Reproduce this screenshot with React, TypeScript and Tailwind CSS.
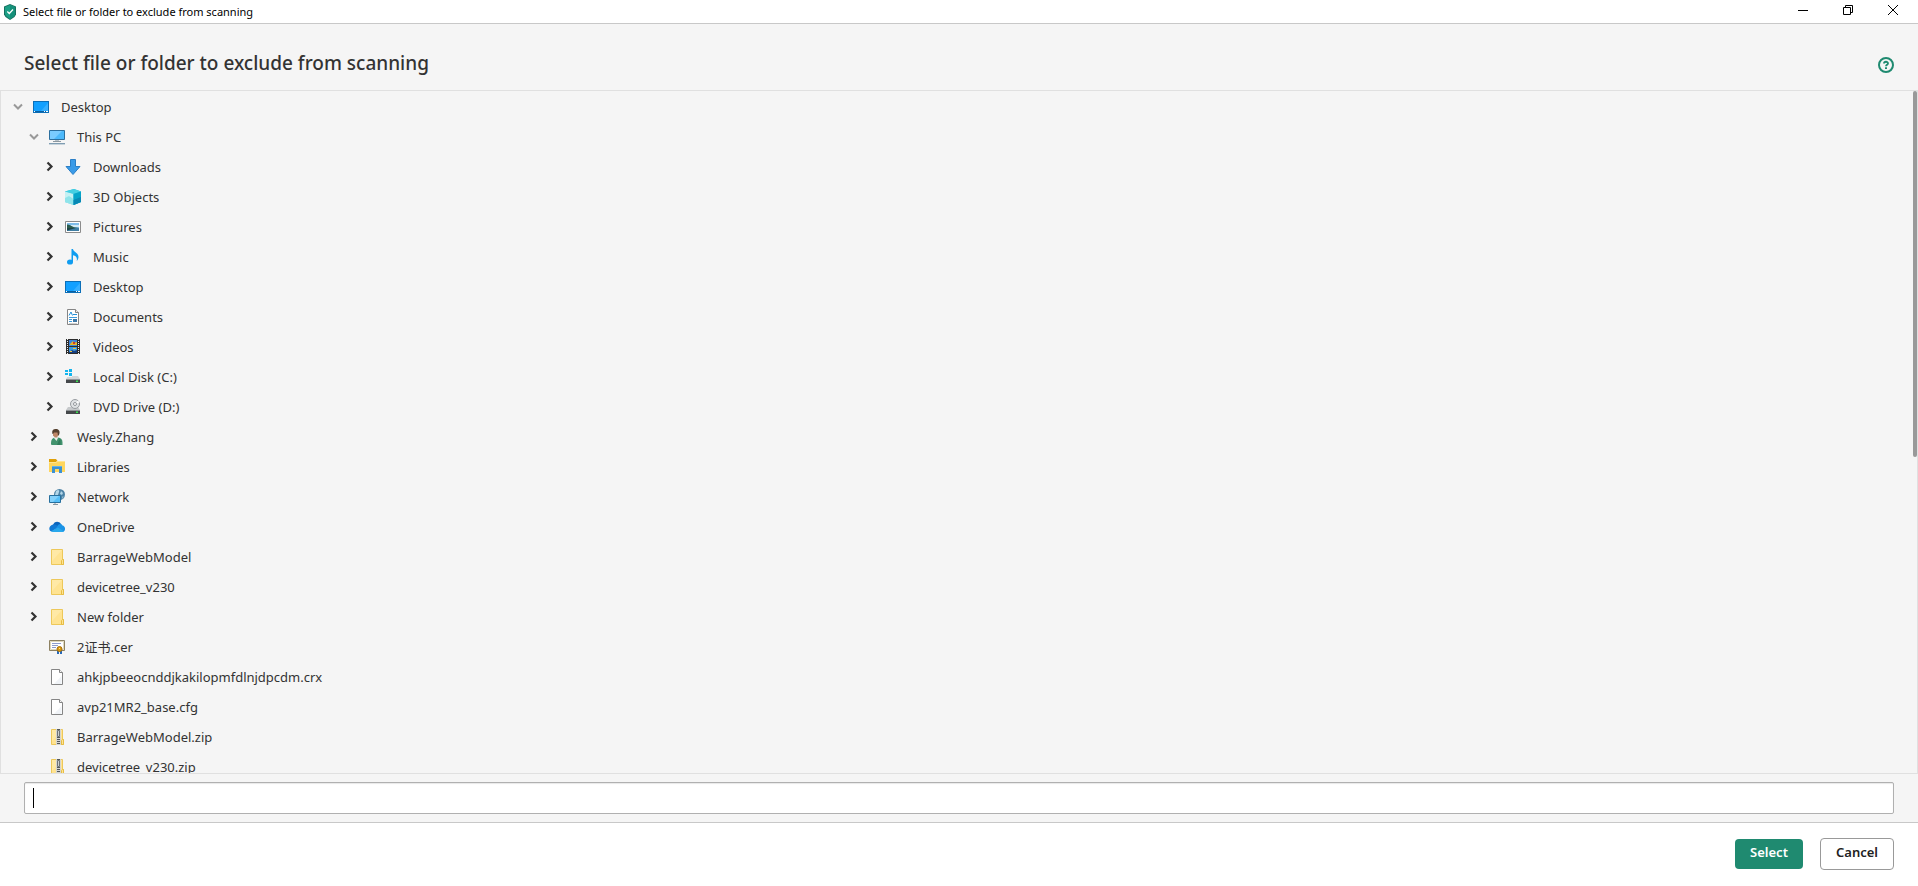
import { useState } from "react";
import { clsx } from "clsx";

type IconName =
  | "desktop"
  | "pc"
  | "downloads"
  | "objects"
  | "pictures"
  | "music"
  | "documents"
  | "videos"
  | "disk"
  | "dvd"
  | "user"
  | "libraries"
  | "network"
  | "onedrive"
  | "folder"
  | "cert"
  | "file"
  | "zip";

interface TreeItem {
  label: string;
  icon: IconName;
  depth: 0 | 1 | 2;
  state: "open" | "closed" | "leaf";
}

const ITEMS: TreeItem[] = [
  { label: "Desktop", icon: "desktop", depth: 0, state: "open" },
  { label: "This PC", icon: "pc", depth: 1, state: "open" },
  { label: "Downloads", icon: "downloads", depth: 2, state: "closed" },
  { label: "3D Objects", icon: "objects", depth: 2, state: "closed" },
  { label: "Pictures", icon: "pictures", depth: 2, state: "closed" },
  { label: "Music", icon: "music", depth: 2, state: "closed" },
  { label: "Desktop", icon: "desktop", depth: 2, state: "closed" },
  { label: "Documents", icon: "documents", depth: 2, state: "closed" },
  { label: "Videos", icon: "videos", depth: 2, state: "closed" },
  { label: "Local Disk (C:)", icon: "disk", depth: 2, state: "closed" },
  { label: "DVD Drive (D:)", icon: "dvd", depth: 2, state: "closed" },
  { label: "Wesly.Zhang", icon: "user", depth: 1, state: "closed" },
  { label: "Libraries", icon: "libraries", depth: 1, state: "closed" },
  { label: "Network", icon: "network", depth: 1, state: "closed" },
  { label: "OneDrive", icon: "onedrive", depth: 1, state: "closed" },
  { label: "BarrageWebModel", icon: "folder", depth: 1, state: "closed" },
  { label: "devicetree_v230", icon: "folder", depth: 1, state: "closed" },
  { label: "New folder", icon: "folder", depth: 1, state: "closed" },
  { label: "2证书.cer", icon: "cert", depth: 1, state: "leaf" },
  { label: "ahkjpbeeocnddjkakilopmfdlnjdpcdm.crx", icon: "file", depth: 1, state: "leaf" },
  { label: "avp21MR2_base.cfg", icon: "file", depth: 1, state: "leaf" },
  { label: "BarrageWebModel.zip", icon: "zip", depth: 1, state: "leaf" },
  { label: "devicetree_v230.zip", icon: "zip", depth: 1, state: "leaf" },
];

const INDENT = { 0: "pl-[10px]", 1: "pl-[26px]", 2: "pl-[42px]" };

const FOLDER = (
  <>
    <path d="M2.5 .5h11v10h1v5h-12z" fill="#ffe391" stroke="#edc85a" />
    <path d="M3 1h10L3 12z" fill="#ffe9a6" />
    <path d="M12.500 15.500v-4l1-1h1v5z" fill="#ffe391" stroke="#e6bd45" />
  </>
);

const ICONS: Record<IconName, React.ReactNode> = {
  desktop: (
    <>
      <path d="M0 2h16v12H0z" fill="#0c6fb8" />
      <path d="M1 3h14v9H1z" fill="#12a0ff" />
      <path d="M15 4v8H8z" fill="#36afff" />
      <path d="M1 12h14v1H1z" fill="#0a5f9f" />
      <path d="M1 12h1v1H1zM11 12h1v1h-1zM13 12h2v1h-2z" fill="#fff" />
    </>
  ),
  pc: (
    <>
      <path d="M.5 1.500h15v9H.5z" fill="#4cb9fb" stroke="#2c6f9e" />
      <path d="M1 2h12L5 10H1z" fill="#7accff" />
      <path d="M6 11h4v1H6z" fill="#b9c3ca" />
      <path d="M4 12h8v1H4z" fill="#8b979f" />
      <path d="M0 14h16v1H0z" fill="#7f9db2" />
      <path d="M0 15h16v1H0z" fill="#c8d4dc" />
    </>
  ),
  downloads: <path d="M5.500.5h5v7h4.500L8 15.500 1 7.500h4.500z" fill="#3a9be8" stroke="#2b7fc6" />,
  objects: (
    <>
      <path d="M0 2.500 9 0l7 2.500V13l-7 3-9-3z" fill="#19b9d8" />
      <path d="M0 2.500 9 0l7 2.500L8.500 5z" fill="#45cfe2" />
      <path d="M0 2.500 8.500 5v11L0 13z" fill="#c5f1f3" />
      <path d="M0 9l4-2 4.500 3v6L0 13z" fill="#8fe4ea" />
      <path d="M8.500 5 16 2.500V13l-7.500 3z" fill="#06a4c9" />
      <path d="M8.500 11 16 8v5l-7.500 3z" fill="#0788b4" />
    </>
  ),
  pictures: (
    <>
      <path d="M.5 2.500h15v11H.5z" fill="#fff" stroke="#8c8c8c" />
      <path d="M2 4h12v8H2z" fill="#7fbdea" />
      <path d="M6 6h8v2H6z" fill="#d5ebf7" />
      <path d="M2 5.500c3 0 4 1.500 7 2.800l5 .7H2z" fill="#2c5c4c" />
      <path d="M2 9h12v3H2z" fill="#3f7ea3" />
      <path d="M2 9h9l-9 2.500z" fill="#1f4648" />
    </>
  ),
  music: (
    <>
      <path d="M6.500 0H8c.3 2.800 5.500 3.700 5.500 8 0 1.500-.7 3-1.800 4 .8-3.300-.7-5.300-3.700-5.700V13H6.500z" fill="#109df0" />
      <ellipse cx="5" cy="13" rx="3" ry="2.600" fill="#109df0" />
    </>
  ),
  documents: (
    <>
      <path d="M2.500.5h8l3 3v12h-11z" fill="#fff" stroke="#858585" />
      <path d="M10.500.5v3h3" fill="#eee" stroke="#858585" />
      <path d="M4 6.500 6 3l1.500 3.500M8 5.500h4" fill="none" stroke="#2590d8" />
      <path d="M4 8.500h8M4 10.500h3M4 12.500h3" stroke="#3a9bdd" />
      <path d="M8 10h4v3H8z" fill="#3c76a6" />
      <path d="M4 14.500h8" stroke="#d0d0d0" />
    </>
  ),
  videos: (
    <>
      <path d="M1 0h14v15H1z" fill="#2d2d2d" />
      <path d="M2.500 0v15M13.500 0v15" stroke="#efefef" strokeDasharray="1 1" />
      <path d="M4 1h8v6H4z" fill="#3c83d6" />
      <path d="M4 8h8v6H4z" fill="#3c9be0" />
      <path d="M5 5l3-3 1 2 3-1v3H5z" fill="#e7b52a" />
      <path d="M8 3h2v2H8z" fill="#c93a2e" />
      <path d="M4 13l3-2 2 1 3-1v3H4z" fill="#173f80" />
      <path d="M8 9h3v1H8zM5 12h2v1H5z" fill="#f0c63c" />
    </>
  ),
  disk: (
    <>
      <path d="M3 7h10l2 3H1z" fill="#d3d5d7" />
      <path d="M1 10h14v4H1z" fill="#45484b" />
      <path d="M1 10h14v1H1z" fill="#909497" />
      <path d="M11 11.500h2v1.500h-2z" fill="#38e04d" />
      <path d="M0 0h7v8H0z" fill="#f5f5f5" />
      <path d="M0 1h3v2H0zM4 0h3v3H4zM0 4h3v2H0zM4 4h3v3H4z" fill="#13b5ee" />
    </>
  ),
  dvd: (
    <>
      <path d="M3 8h10l2 3H1z" fill="#c6c9cb" />
      <path d="M1 11h14v4H1z" fill="#45484b" />
      <path d="M1 11h14v1H1z" fill="#8f9396" />
      <path d="M11 12.500h2v1.500h-2z" fill="#38e04d" />
      <circle cx="10" cy="5" r="4.500" fill="#dfe2e4" stroke="#989ca0" />
      <path d="M10 5 13 1.500l1.500 2z" fill="#fff" />
      <circle cx="10" cy="5" r="1.500" fill="#fff" stroke="#92979b" />
    </>
  ),
  user: (
    <>
      <path d="M2 15c0-4 1-6 4-6.500h3c3 .3 4.500 2 4.500 5V16H2.500z" fill="#42936e" />
      <path d="M5.500 8h3l.5 1-1.500 3L5 9z" fill="#e9eee9" />
      <path d="M4 3.500c0-3 5.500-3 5.500 0V6L8 8.500H6L4 6.500z" fill="#bf8768" />
      <path d="M3.500 5C2.500 1 4.500 0 7 0c3 0 4.500 2.500 3 6l-1 .8L8.500 3.500H5L4 5z" fill="#55402f" />
      <path d="M8 16l2-5 1.500-1V16z" fill="#327c5b" />
    </>
  ),
  libraries: (
    <>
      <path d="M0 0h7l1.500 2H16v3H0z" fill="#e0a008" />
      <path d="M0 3h7l1-1h8v11H0z" fill="#ffd65c" />
      <path d="M0 3h7l1-1h8v1H8L7 4H0z" fill="#ffe491" />
      <path d="M3 14V7h10v7h-3v-4H6v4z" fill="#3c91d2" />
      <path d="M3 7h10v1H3z" fill="#63b0e8" />
    </>
  ),
  network: (
    <>
      <circle cx="10.500" cy="5.500" r="5.500" fill="#4c82a6" />
      <path d="M7 2c2-2 4-1 3 1l-1 3-3 0zM12 2l2 2-1 2-2-1z" fill="#b3d6e8" />
      <path d="M13 7.500h2l-2 2.500z" fill="#8cb9d1" />
      <path d="M.5 6.500h11v7H.5z" fill="#55bff8" stroke="#28709e" />
      <path d="M1 7h9l-6 6H1z" fill="#84d1fb" />
      <path d="M4 15.500h5M6 14v1" stroke="#8798a2" />
    </>
  ),
  onedrive: (
    <>
      <path d="M4 6C5 2 10 1.500 12 5l1 3-6 3-4-4z" fill="#0a65bd" />
      <path d="M4 5.500c3-.5 4 1 6 2l-7 5C-.5 12.500-1 7 4 5.500z" fill="#1179d4" />
      <path d="M8 8c1-4 5-3.500 5.500-1.500C17 7 17 13 13 13H3z" fill="#1b93e6" />
      <path d="M2 12.300 9 8.500l6 4c-1 .5-2 .5-3 .5H4z" fill="#28a8ec" />
    </>
  ),
  folder: FOLDER,
  cert: (
    <>
      <path d="M.5 1.500h15v10H.5z" fill="#fff" stroke="#8d8161" />
      <path d="M1.500 2.500h13v8h-13z" fill="none" stroke="#ded7bd" />
      <path d="M3 4.500h9M3 6.500h6M3 8.500h4" stroke="#8c9ccc" />
      <path d="M8 11h2v4H8zM11 11h2v4h-2z" fill="#2668b8" />
      <circle cx="10.500" cy="10" r="2.500" fill="#dc9a12" stroke="#a97008" />
      <path d="M10 9h1v1h-1z" fill="#ffe37d" />
    </>
  ),
  file: (
    <>
      <path d="M2.500.5h8l3 3v12h-11z" fill="#fff" stroke="#858585" />
      <path d="M12.500 7v8H5z" fill="#f0f3f7" />
      <path d="M10.500.5v3h3" fill="#f5f5f5" stroke="#858585" />
    </>
  ),
  zip: (
    <>
      {FOLDER}
      <path d="M7 0h5v16H7z" fill="#d5d5d0" />
      <path d="M9.500 0v16" stroke="#55585a" strokeWidth="3" strokeDasharray="1 1" />
      <path d="M8.500 1.500h2v6h-2z" fill="#c9cccf" stroke="#6e7376" />
    </>
  ),
};

function Chevron({ open }: { open: boolean }) {
  return (
    <svg viewBox="0 0 12 12" className="size-3" fill="none">
      {open ? (
        <path d="M3 3.500 7 7.500l4-4" stroke="#999" strokeWidth="2" />
      ) : (
        <path d="M4.500 1.500 8.500 5.500l-4 4" stroke="#333" strokeWidth="2.200" />
      )}
    </svg>
  );
}

function TreeRow({ item }: { item: TreeItem }) {
  return (
    <li
      role="treeitem"
      aria-level={item.depth + 1}
      aria-expanded={item.state === "leaf" ? undefined : item.state === "open"}
      className={clsx("flex h-[30px] items-center", INDENT[item.depth])}
    >
      <span className="mr-[10px] flex w-3 shrink-0">
        {item.state !== "leaf" && (
          <button type="button" aria-label={`Toggle ${item.label}`}>
            <Chevron open={item.state === "open"} />
          </button>
        )}
      </span>
      <svg viewBox="0 0 16 16" className="mr-3 size-4 shrink-0">
        {ICONS[item.icon]}
      </svg>
      <span className="whitespace-nowrap text-[13px] leading-5">{item.label}</span>
    </li>
  );
}

function TitleBar() {
  return (
    <div className="flex h-6 shrink-0 items-center border-b border-[#c8c8c8] bg-white text-black">
      <svg viewBox="0 0 12 16" className="ml-1 h-4 w-3">
        <path d="M6 0l6 2.500v8L10.500 13 6 16l-4.500-3L0 10.500v-8z" fill="#16705f" />
        <path d="M6 1l5 2v7l-1 2-4 3-4-3-1-2V3z" fill="#1c9f86" />
        <path d="M6 1l5 2v7l-1 2-4 3z" fill="#15907a" />
        <path d="M3.300 7.500 5.300 9.500 9 5.500" fill="none" stroke="#fff" strokeWidth="1.300" />
      </svg>
      <span className="ml-[7px] text-[11px] leading-4">Select file or folder to exclude from scanning</span>
      <div className="ml-auto mr-0.5 flex h-full items-start">
        <button type="button" aria-label="Minimize" className="flex h-5 w-[46px] items-center justify-center">
          <svg viewBox="0 0 10 10" className="size-[10px]">
            <path d="M0 5.500h10" stroke="#000" />
          </svg>
        </button>
        <button type="button" aria-label="Restore" className="flex h-5 w-11 items-center justify-center">
          <svg viewBox="0 0 10 10" className="size-[10px]" fill="none" stroke="#000">
            <path d="M.5 2.500h7v7h-7zM2.500 2.500v-2h7v7h-2" />
          </svg>
        </button>
        <button type="button" aria-label="Close" className="flex h-5 w-[46px] items-center justify-center">
          <svg viewBox="0 0 10 10" className="size-[10px]">
            <path d="M0 0l10 10M10 0L0 10" stroke="#000" />
          </svg>
        </button>
      </div>
    </div>
  );
}

export default function App() {
  const [path, setPath] = useState("");

  return (
    <div className="flex h-screen flex-col bg-[#f5f5f5] font-['Noto_Sans','Noto_Sans_CJK_SC',sans-serif] text-[#333]">
      <TitleBar />

      <header className="flex h-[66px] shrink-0 items-center justify-between px-6">
        <h1 className="pt-3 text-[19px] font-medium leading-6">Select file or folder to exclude from scanning</h1>
        <button type="button" aria-label="Help" className="pt-4">
          <svg viewBox="0 0 16 16" className="size-4" fill="none" stroke="#1f8a70">
            <circle cx="8" cy="8" r="7" strokeWidth="2" />
            <path d="M6 6.500C6 4.200 10 4.200 10 6.400 10 7.800 8 7.800 8 9.300" strokeWidth="1.800" />
            <path d="M8 10.300v1.700" strokeWidth="2" />
          </svg>
        </button>
      </header>

      <main className="relative min-h-0 flex-1 overflow-hidden border border-[#e0e0e0] pt-px">
        <ul role="tree" aria-label="Files and folders">
          {ITEMS.map((item, i) => (
            <TreeRow key={i} item={item} />
          ))}
        </ul>
        <div className="absolute right-0 top-0 h-[366px] w-1 rounded-sm bg-[#999]" />
      </main>

      <div className="relative shrink-0 px-6 py-2">
        <input
          type="text"
          aria-label="Path"
          value={path}
          onChange={(e) => setPath(e.target.value)}
          className="block h-8 w-full rounded-xs border border-[#b0b0b0] bg-white px-2 text-[13px] caret-transparent shadow-[inset_0_1px_1px_#e8e8e8] outline-none"
        />
        <span className="absolute left-[33px] top-[14px] h-5 w-px bg-black" />
      </div>

      <footer className="flex h-16 shrink-0 items-center justify-end gap-[17px] border-t border-[#c8c8c8] bg-white px-6 pb-0.5 text-[13px] font-semibold">
        <button type="button" className="h-[30px] w-[68px] rounded bg-[#1f8a70] pb-0.5 text-white">
          Select
        </button>
        <button type="button" className="h-8 w-[74px] rounded border border-[#999] bg-white pb-0.5 text-[#222]">
          Cancel
        </button>
      </footer>
    </div>
  );
}
